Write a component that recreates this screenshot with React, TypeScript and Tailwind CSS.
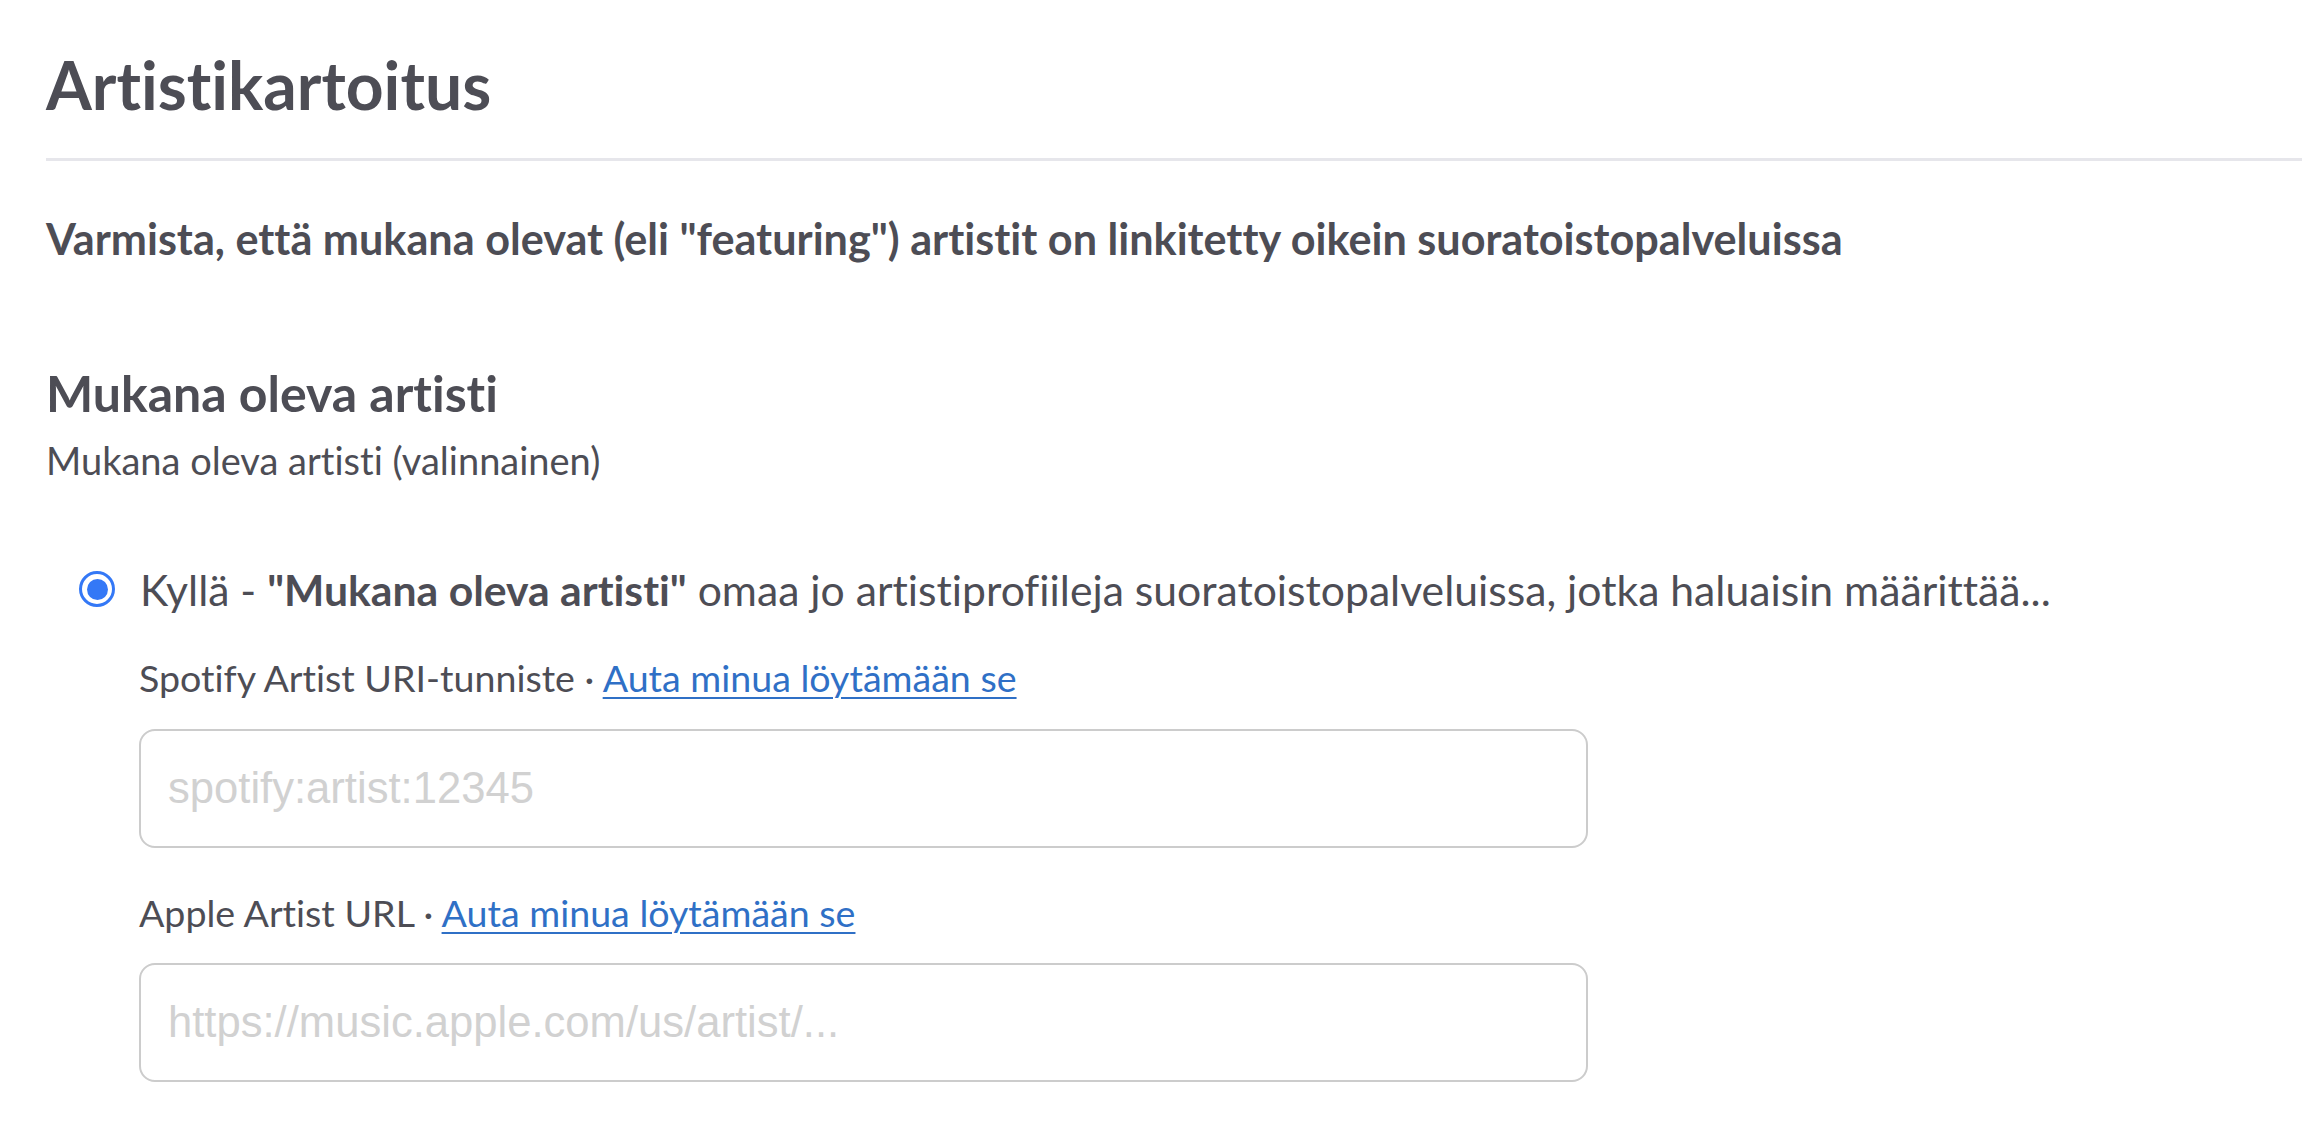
import React from "react";

const lato = { fontFamily: "Lato, 'Noto Sans', sans-serif" };

function FieldLabel({ name }: { name: string }) {
  return (
    <div className="text-[37.6px] leading-[1.2] text-[#4d4d55]">
      {name} ·{" "}
      <a href="#" className="text-[#2f70c6] underline decoration-2 underline-offset-[5px]">
        Auta minua löytämään se
      </a>
    </div>
  );
}

function TextField({ placeholder }: { placeholder: string }) {
  return (
    <input
      type="text"
      placeholder={placeholder}
      className="block h-[119px] w-[1449px] rounded-[16px] border-[2.5px] border-[#cccccc] bg-white pl-[27px] text-[43.6px] text-[#4d4d55] outline-none placeholder:text-[#d1d1d1]"
      style={{ fontFamily: "'Liberation Sans', Arial, sans-serif" }}
    />
  );
}

export default function App() {
  return (
    <div className="min-h-screen bg-white text-[#4d4d55] [font-variant-ligatures:none]" style={lato}>
      <div className="pl-[46px] pt-[45px]">
        <h1 className="text-[66px] font-bold leading-[1.2]">Artistikartoitus</h1>
        <div className="mt-[34px] h-[3px] bg-[#e6e6eb]" />

        <p className="mt-[52px] text-[43.2px] font-bold leading-[1.2]">
          Varmista, että mukana olevat (eli "featuring") artistit on linkitetty oikein suoratoistopalveluissa
        </p>

        <h2 className="mt-[98px] text-[50px] font-bold leading-[1.2]">Mukana oleva artisti</h2>
        <p className="mt-[15px] text-[38px] leading-[1.2]">Mukana oleva artisti (valinnainen)</p>

        <div className="mt-[80px] flex items-center">
          <span className="ml-[33px] flex h-[36px] w-[36px] items-center justify-center rounded-full border-[3px] border-[#3478f6]">
            <span className="h-[21px] w-[21px] rounded-full bg-[#3478f6]" />
          </span>
          <span className="ml-[25px] text-[42.7px] leading-[1.2]">
            Kyllä - <b>"Mukana oleva artisti"</b> omaa jo artistiprofiileja suoratoistopalveluissa, jotka haluaisin määrittää...
          </span>
        </div>

        <div className="ml-[93px]">
          <div className="mt-[40px]">
            <FieldLabel name="Spotify Artist URI-tunniste" />
          </div>
          <div className="mt-[29px]">
            <TextField placeholder="spotify:artist:12345" />
          </div>
          <div className="mt-[42px]">
            <FieldLabel name="Apple Artist URL" />
          </div>
          <div className="mt-[28px]">
            <TextField placeholder="https://music.apple.com/us/artist/..." />
          </div>
        </div>
      </div>
    </div>
  );
}
